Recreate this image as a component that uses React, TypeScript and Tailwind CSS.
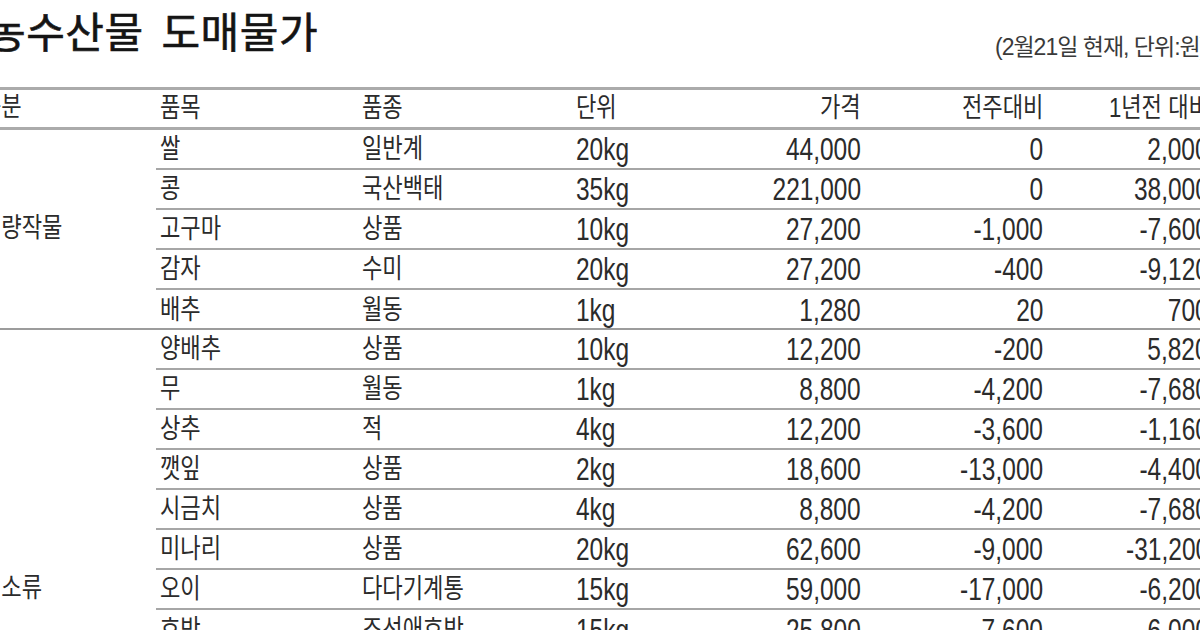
import React from 'react';

type Row = {
  item: string;
  kind: string;
  unit: string;
  price: string;
  week: string;
  year: string;
};

type Group = {
  name: string;
  rows: Row[];
  heightClass: string;
};

const groups: Group[] = [
  {
    name: '식량작물',
    heightClass: 'h-[200px]',
    rows: [
      { item: '쌀', kind: '일반계', unit: '20kg', price: '44,000', week: '0', year: '2,000' },
      { item: '콩', kind: '국산백태', unit: '35kg', price: '221,000', week: '0', year: '38,000' },
      { item: '고구마', kind: '상품', unit: '10kg', price: '27,200', week: '-1,000', year: '-7,600' },
      { item: '감자', kind: '수미', unit: '20kg', price: '27,200', week: '-400', year: '-9,120' },
      { item: '배추', kind: '월동', unit: '1kg', price: '1,280', week: '20', year: '700' },
    ],
  },
  {
    name: '채소류',
    heightClass: 'h-[520px]',
    rows: [
      { item: '양배추', kind: '상품', unit: '10kg', price: '12,200', week: '-200', year: '5,820' },
      { item: '무', kind: '월동', unit: '1kg', price: '8,800', week: '-4,200', year: '-7,680' },
      { item: '상추', kind: '적', unit: '4kg', price: '12,200', week: '-3,600', year: '-1,160' },
      { item: '깻잎', kind: '상품', unit: '2kg', price: '18,600', week: '-13,000', year: '-4,400' },
      { item: '시금치', kind: '상품', unit: '4kg', price: '8,800', week: '-4,200', year: '-7,680' },
      { item: '미나리', kind: '상품', unit: '20kg', price: '62,600', week: '-9,000', year: '-31,200' },
      { item: '오이', kind: '다다기계통', unit: '15kg', price: '59,000', week: '-17,000', year: '-6,200' },
      { item: '호박', kind: '조선애호박', unit: '15kg', price: '25,800', week: '-7,600', year: '-6,000' },
    ],
  },
];

// Korean text in the print is condensed, so squeeze it horizontally
const K: React.FC<{ children: React.ReactNode; right?: boolean }> = ({ children, right }) => (
  <span
    className={`inline-block whitespace-nowrap text-[27px] leading-none scale-x-[0.82] ${right ? 'origin-right' : 'origin-left'}`}
  >
    {children}
  </span>
);

const N: React.FC<{ children: React.ReactNode; right?: boolean }> = ({ children, right }) => (
  <span
    className={`inline-block whitespace-nowrap text-[31px] leading-none scale-x-[0.79] ${right ? 'origin-right' : 'origin-left'}`}
  >
    {children}
  </span>
);

const Cols: React.FC<{ cells: React.ReactNode[] }> = ({ cells }) => (
  <>
    <div className="flex w-[202px] shrink-0 items-center">{cells[0]}</div>
    <div className="flex w-[214px] shrink-0 items-center">{cells[1]}</div>
    <div className="flex w-[140px] shrink-0 items-center">{cells[2]}</div>
    <div className="flex w-[145px] shrink-0 items-center justify-end">{cells[3]}</div>
    <div className="flex w-[182px] shrink-0 items-center justify-end">{cells[4]}</div>
    <div className="flex w-[166px] shrink-0 items-center justify-end">{cells[5]}</div>
  </>
);

const App: React.FC = () => {
  return (
    <div
      className="h-[630px] w-[1200px] overflow-hidden bg-white text-[#2b2b2b]"
      style={{ fontFamily: '"Liberation Sans", "Noto Sans CJK KR", sans-serif' }}
    >
      <div className="flex h-[87px] items-start justify-between">
        <h1
          className="-ml-[13px] mt-[9px] whitespace-nowrap text-[42px] font-normal leading-none tracking-[0.5px] text-[#141414] [word-spacing:8px]"
          style={{ fontFamily: '"Noto Sans CJK KR", sans-serif', WebkitTextStroke: '0.6px #141414' }}
        >
          농수산물 도매물가
        </h1>
        <div className="mt-[36px] w-[205px] shrink-0 text-[#3a3a3a]">
          <span className="inline-block whitespace-nowrap text-[23px] leading-none tracking-[-1px]">
            (2월21일 현재, 단위:원)
          </span>
        </div>
      </div>

      <div className="flex h-[43px] border-y-[3px] border-[#ababab]">
        <div className="flex w-[160px] shrink-0 items-center">
          <span className="-ml-[19px]">
            <K>구분</K>
          </span>
        </div>
        <Cols
          cells={[
            <K>품목</K>,
            <K>품종</K>,
            <K>단위</K>,
            <K right>가격</K>,
            <K right>전주대비</K>,
            <K right>1년전 대비</K>,
          ]}
        />
      </div>

      {groups.map((group) => (
        <div key={group.name} className={`flex border-b-2 border-[#9c9c9c] ${group.heightClass}`}>
          <div className="flex w-[156px] shrink-0 items-center">
            <span className="-ml-[19px]">
              <K>{group.name}</K>
            </span>
          </div>
          <div className="flex flex-col">
            {group.rows.map((row, i) => (
              <div
                key={row.item}
                className={`flex h-[40px] shrink-0 pl-[4px] ${
                  i < group.rows.length - 1 ? 'border-b-2 border-[#a6a6a6]' : ''
                }`}
              >
                <Cols
                  cells={[
                    <K>{row.item}</K>,
                    <K>{row.kind}</K>,
                    <N>{row.unit}</N>,
                    <N right>{row.price}</N>,
                    <N right>{row.week}</N>,
                    <N right>{row.year}</N>,
                  ]}
                />
              </div>
            ))}
          </div>
        </div>
      ))}
    </div>
  );
};

export default App;
